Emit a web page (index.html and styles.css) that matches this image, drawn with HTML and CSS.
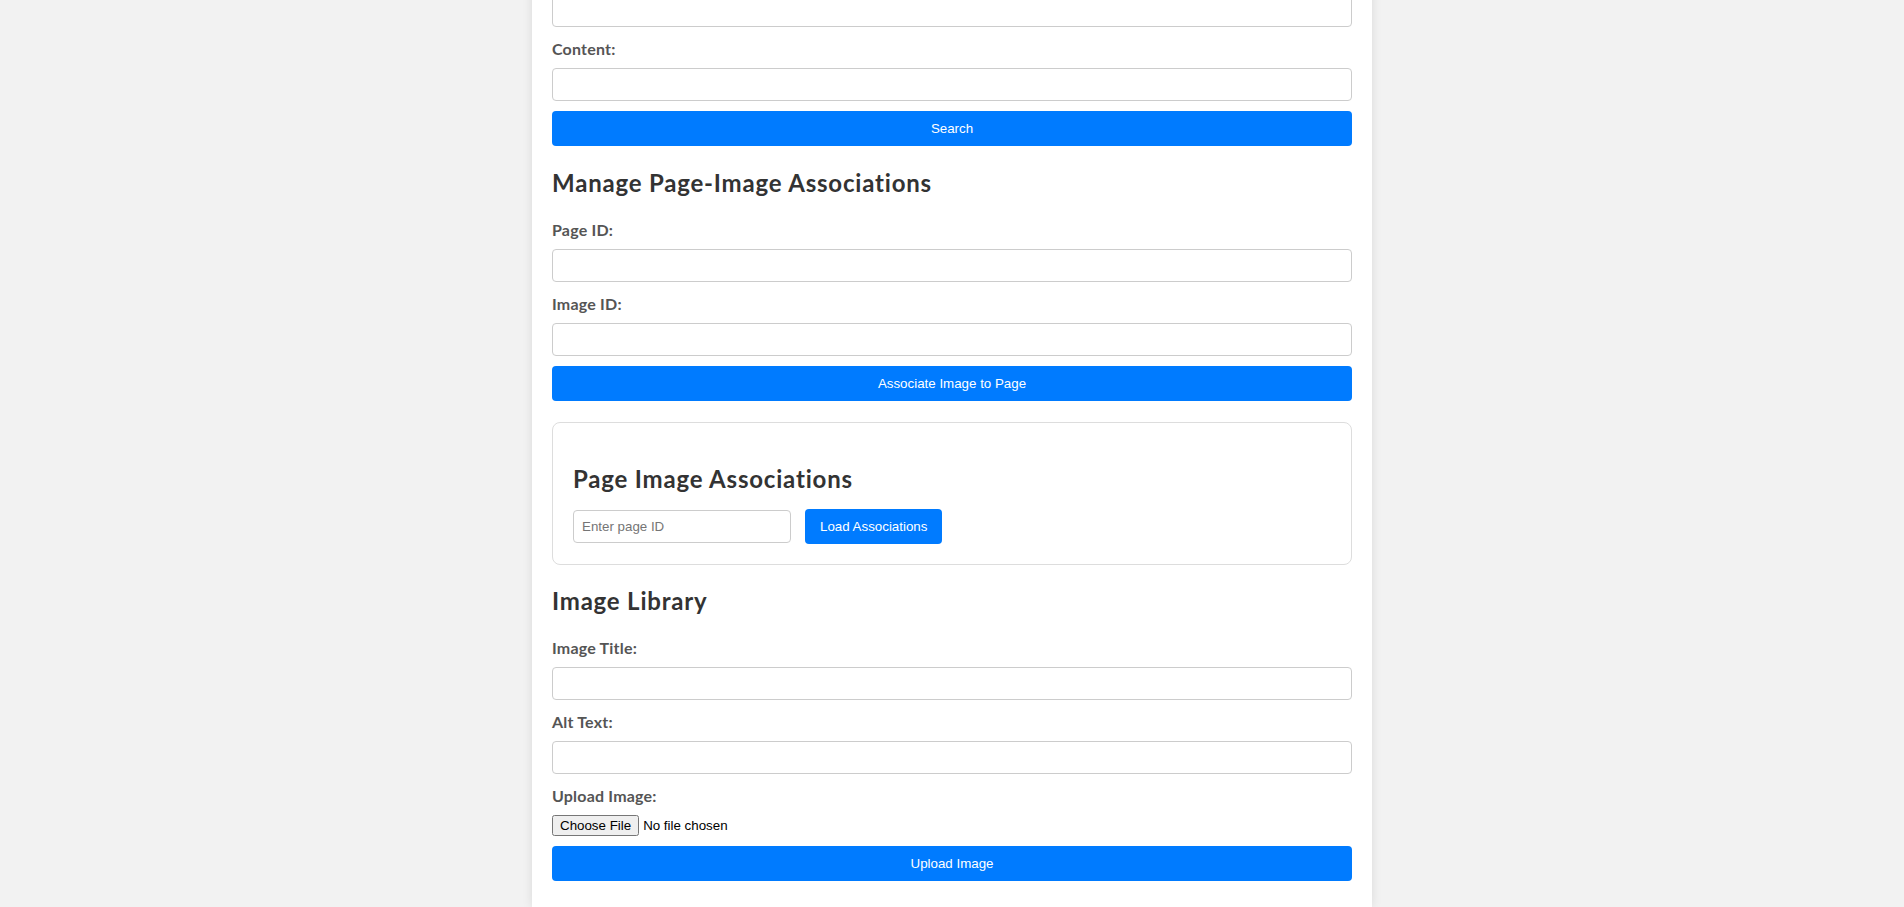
FILE: index.html
```html
<!DOCTYPE html>
<html lang="en">
<head>
<meta charset="utf-8">
<title>Page Manager</title>
<link rel="stylesheet" href="styles.css">
</head>
<body>
<div class="container">
  <div class="form-group">
    <input type="text" class="text-input" aria-label="Title">
  </div>
  <div class="form-group">
    <label class="field-label" for="content">Content:</label>
    <input type="text" id="content" class="text-input">
  </div>
  <button class="btn btn-block">Search</button>

  <h2 class="section-title">Manage Page-Image Associations</h2>
  <div class="form-group">
    <label class="field-label" for="pageId">Page ID:</label>
    <input type="text" id="pageId" class="text-input">
  </div>
  <div class="form-group">
    <label class="field-label" for="imageId">Image ID:</label>
    <input type="text" id="imageId" class="text-input">
  </div>
  <button class="btn btn-block">Associate Image to Page</button>

  <div class="card">
    <h2 class="card-title">Page Image Associations</h2>
    <div class="inline-row">
      <input type="text" class="small-input" placeholder="Enter page ID">
      <button class="btn btn-inline">Load Associations</button>
    </div>
  </div>

  <h2 class="section-title">Image Library</h2>
  <div class="form-group">
    <label class="field-label" for="imageTitle">Image Title:</label>
    <input type="text" id="imageTitle" class="text-input">
  </div>
  <div class="form-group">
    <label class="field-label" for="altText">Alt Text:</label>
    <input type="text" id="altText" class="text-input">
  </div>
  <div class="form-group">
    <label class="field-label" for="upload">Upload Image:</label>
    <input type="file" id="upload" class="file-input">
  </div>
  <button class="btn btn-block">Upload Image</button>
</div>
</body>
</html>
```
FILE: styles.css
```css
html {
  overflow: hidden;
}

body {
  margin: 0;
  background: #f2f2f2;
  font-family: Lato, "Segoe UI", "Liberation Sans", sans-serif;
  color: #333;
}

.container {
  max-width: 800px;
  margin: -26px auto 0;
  padding: 20px 20px 26px;
  background: #fff;
  box-shadow: 0 0 10px rgba(0, 0, 0, 0.1);
}

.form-group {
  margin-bottom: 10px;
}

.field-label {
  display: block;
  font-size: 16px;
  line-height: 23px;
  font-weight: 700;
  letter-spacing: 0.2px;
  color: #555;
  margin-bottom: 8px;
}

.text-input {
  display: block;
  box-sizing: border-box;
  width: 100%;
  height: 33px;
  padding: 8px;
  border: 1px solid #ccc;
  border-radius: 4px;
  font: 13.33px "Liberation Sans", Arial, sans-serif;
  margin: 0;
}

.file-input {
  display: block;
  height: 21px;
  margin: 0;
  font: 13.33px "Liberation Sans", Arial, sans-serif;
  color: #000;
}

.btn {
  background: #007bff;
  color: #fff;
  border: none;
  border-radius: 4px;
  height: 35px;
  font: 13.33px "Liberation Sans", Arial, sans-serif;
  cursor: pointer;
  margin: 0;
}

.btn-block {
  display: block;
  width: 100%;
  padding: 0 10px;
}

.btn-inline {
  padding: 0 15px;
}

.section-title {
  font-size: 24px;
  line-height: 30px;
  font-weight: 700;
  letter-spacing: 0.8px;
  color: #333;
  margin: 22px 0 20px;
}

.card + .section-title {
  margin-top: 21px;
}

.card {
  margin-top: 21px;
  border: 1px solid #ddd;
  border-radius: 8px;
  padding: 20px;
}

.card-title {
  font-size: 24px;
  line-height: 30px;
  font-weight: 700;
  letter-spacing: 0.8px;
  color: #333;
  margin: 21px 0 15px;
}

.inline-row {
  display: flex;
  align-items: center;
  gap: 14px;
}

.small-input {
  box-sizing: border-box;
  width: 218px;
  height: 33px;
  padding: 8px;
  border: 1px solid #ccc;
  border-radius: 4px;
  font: 13.33px "Liberation Sans", Arial, sans-serif;
  margin: 0;
}

.small-input::placeholder {
  color: #757575;
}
```
